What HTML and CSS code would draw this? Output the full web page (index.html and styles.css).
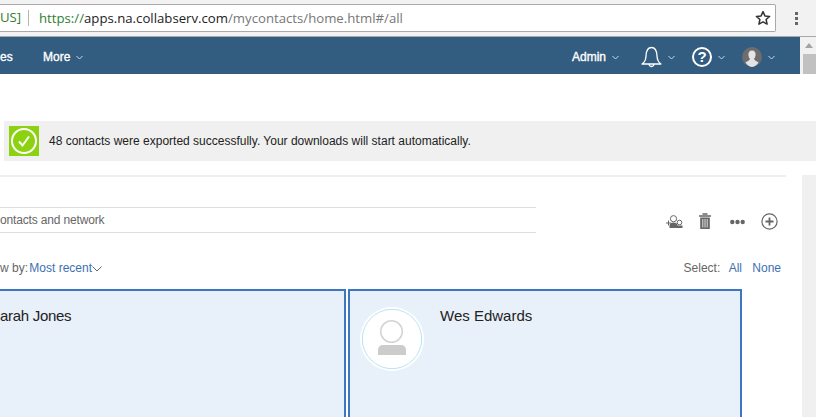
FILE: index.html
```html
<!DOCTYPE html>
<html lang="en">
<head>
<meta charset="utf-8">
<title>Contacts</title>
<link rel="stylesheet" href="styles.css">
</head>
<body>
<header class="chrome">
  <div class="address">
    <span class="cert">US]</span>
    <span class="url"><span class="scheme">https://</span><span class="host">apps.na.collabserv.com</span><span class="path">/mycontacts/home.html#/all</span></span>
    <svg class="star" width="16" height="16" viewBox="0 0 16 16"><path d="M8 1.600l1.900 4.300 4.700.5-3.500 3.100 1 4.600L8 11.800l-4.100 2.300 1-4.600-3.500-3.100 4.700-.5z" fill="none" stroke="#333" stroke-width="1.500" stroke-linejoin="round"/></svg>
  </div>
  <div class="kebab"><i></i><i></i><i></i></div>
</header>
<div class="navrow">
  <nav class="nav">
    <span class="nav-clip nav-text">es</span>
    <span class="nav-item more nav-text">More <svg class="chev" width="7" height="5" viewBox="0 0 7 5"><path d="M.5 1l3 3 3-3" fill="none" stroke="#c9d6e2"/></svg></span>
    <span class="nav-right">
      <span class="nav-item nav-text">Admin <svg class="chev" width="7" height="5" viewBox="0 0 7 5"><path d="M.5 1l3 3 3-3" fill="none" stroke="#c9d6e2"/></svg></span>
      <span class="nav-icon bell">
        <svg width="22" height="22" viewBox="0 0 22 22"><path d="M1 18c2.500-1.500 3.800-4 4-8 .2-5 2-8.500 5.500-8.500S15.800 5 16 10c.2 4 1.500 6.500 4 8zM8 18c.3 3.300 4.700 3.300 5 0" fill="none" stroke="#fff" stroke-width="1.300" stroke-linejoin="round"/></svg>
        <svg class="chev" width="7" height="5" viewBox="0 0 7 5"><path d="M.5 1l3 3 3-3" fill="none" stroke="#c9d6e2"/></svg>
      </span>
      <span class="nav-icon help">
        <span class="help-ring">?</span>
        <svg class="chev" width="7" height="5" viewBox="0 0 7 5"><path d="M.5 1l3 3 3-3" fill="none" stroke="#c9d6e2"/></svg>
      </span>
      <span class="nav-icon user">
        <svg width="20" height="20" viewBox="0 0 20 20"><circle cx="10" cy="10" r="10" fill="#6d6d6d"/><path d="M10 3.500c2.500 0 3.800 2 3.600 4.500-.2 2-.9 3.200-1.600 4 .2 1.300 2.500 1.900 4.500 3.500A10 10 0 0 1 10 20a10 10 0 0 1-6.500-4.500c2-1.600 4.300-2.200 4.500-3.500-.7-.8-1.400-2-1.600-4C6.200 5.500 7.500 3.500 10 3.500z" fill="#e4e4e4"/></svg>
        <svg class="chev" width="7" height="5" viewBox="0 0 7 5"><path d="M.5 1l3 3 3-3" fill="none" stroke="#c9d6e2"/></svg>
      </span>
    </span>
  </nav>
  <div class="scrollbar"><svg class="arrow" width="8" height="5" viewBox="0 0 8 5"><path d="M4 0l4 5H0z" fill="#a3a3a3"/></svg><div class="thumb"></div></div>
</div>
<main class="page">
  <div class="notice">
    <span class="notice-icon">
      <svg width="30" height="30" viewBox="0 0 30 30"><circle cx="15" cy="15" r="12" fill="none" stroke="#fff" stroke-width="2"/><path d="M10 15.500l3.500 4 6.500-9" fill="none" stroke="#fff" stroke-width="2"/></svg>
    </span>
    <span>48 contacts were exported successfully. Your downloads will start automatically.</span>
  </div>
  <div class="body">
    <div class="content">
      <div class="toolbar">
        <div class="search"><span class="search-text">ontacts and network</span></div>
        <div class="tools">
          <svg class="tool-user" width="17" height="14" viewBox="0 0 17 14"><path d="M0 8h5M2.500 5.500v5" stroke="#666"/><circle cx="7.500" cy="3.700" r="3.100" fill="none" stroke="#666"/><path d="M3.500 13v-2.500C3.500 8.500 5 7.500 7.500 7.500s4 1 4 3V13z" fill="#666"/><circle cx="13.500" cy="7.500" r="2.300" fill="#fff" stroke="#666"/><path d="M11 10.500h5.500V13H11z" fill="#666"/></svg>
          <svg class="tool-trash" width="12" height="16" viewBox="0 0 12 16"><path d="M3.500 1h5M0 3h12" stroke="#666" stroke-width="1.500"/><path d="M1.200 4.500h9.600V16H1.200z" fill="#666"/><path d="M3.800 6v8.500M6 6v8.500M8.200 6v8.500" stroke="#fff" stroke-width=".8"/></svg>
          <svg class="tool-more" width="15" height="6" viewBox="0 0 15 6"><circle cx="2.300" cy="3" r="2.200" fill="#666"/><circle cx="7.500" cy="3" r="2.200" fill="#666"/><circle cx="12.700" cy="3" r="2.200" fill="#666"/></svg>
          <svg class="tool-add" width="17" height="17" viewBox="0 0 17 17"><circle cx="8.500" cy="8.500" r="7.600" fill="none" stroke="#666" stroke-width="1.200"/><path d="M8.500 4.500v8M4.500 8.500h8" stroke="#666" stroke-width="1.800"/></svg>
        </div>
      </div>
      <div class="filters">
        <div class="view">w by: <a class="link">Most recent</a><svg width="10" height="6" viewBox="0 0 10 6"><path d="M.5.500l4.500 4.500L9.500.500" fill="none" stroke="#666"/></svg></div>
        <div class="select">Select: <a class="link">All</a> <a class="link">None</a></div>
      </div>
      <div class="cards">
        <article class="card first"><span class="name">arah Jones</span></article>
        <article class="card">
          <span class="avatar">
            <svg width="64" height="64" viewBox="0 0 64 64"><circle cx="32" cy="32" r="32" fill="#fff"/><circle cx="32" cy="32" r="29.700" fill="#fff" stroke="#a6dcef" stroke-width=".8"/><circle cx="31.500" cy="24.500" r="10.800" fill="none" stroke="#d4d4d4" stroke-width="1.500"/><path d="M18 48v-5c0-3 2-5 5-5h18c3 0 5 2 5 5v5z" fill="#cccccc"/></svg>
          </span>
          <span class="name">Wes Edwards</span>
        </article>
      </div>
    </div>
    <aside class="gutter"></aside>
  </div>
</main>
</body>
</html>
```
FILE: styles.css
```css
* { box-sizing: border-box; }
html, body { margin: 0; padding: 0; height: 100%; overflow: hidden; background: #fff; }
body { width: 816px; height: 417px; font-family: "Liberation Sans", Arial, sans-serif; font-size: 12px; color: #222; }

.chrome { height: 37px; background: #f2f2f2; border-bottom: 1px solid #a8a8a8; display: flex; align-items: flex-start; padding-top: 4px; }
.address { width: 776px; height: 28px; background: #fff; border: 1px solid #a9a9a9; border-left: 0; border-radius: 0 2px 2px 0; display: flex; align-items: center; font-family: "Open Sans", sans-serif; font-size: 13.2px; }
.cert { color: #2f7d32; width: 29px; border-right: 1px solid #b5b5b5; height: 16px; line-height: 15px; padding-right: 9px; text-align: right; }
.url { margin-left: 10px; flex: 1; white-space: nowrap; }
.scheme { color: #2e7d32; }
.host { color: #222; }
.path { color: #777; }
.star { margin-right: 4px; }
.kebab { width: 40px; display: flex; flex-direction: column; align-items: center; gap: 2px; padding-top: 8px; }
.kebab i { width: 3px; height: 3px; background: #666; display: block; }

.navrow { display: flex; height: 37px; }
.nav { width: 800px; background: #325c80; color: #fff; display: flex; align-items: center; padding-top: 3px; }
.nav-text { -webkit-text-stroke: .35px #fff; }
.nav-clip { width: 43px; }
.nav-item { display: inline-flex; align-items: center; gap: 6px; }
.chev { flex: none; }
.nav-right { margin-left: auto; display: flex; align-items: center; padding-right: 25px; }
.nav-icon { display: inline-flex; align-items: center; gap: 6px; }
.bell { margin-left: 22px; gap: 5px; }
.help { margin-left: 17px; }
.help-ring { width: 20px; height: 20px; border: 2px solid #fff; border-radius: 50%; font-size: 15px; font-weight: bold; line-height: 16px; text-align: center; }
.user { margin-left: 17px; }
.scrollbar { width: 16px; background: #f1f1f1; display: flex; flex-direction: column; align-items: center; padding-top: 6px; }
.arrow { margin-left: 1px; }
.thumb { width: 13px; margin-left: 2px; height: 20px; margin-top: 6px; background: #c1c1c1; }

.page { display: flex; flex-direction: column; }
.notice { margin: 47px 0 0 4px; height: 40px; background: #f0f0f0; display: flex; align-items: center; gap: 10px; padding-left: 5px; color: #222; }
.notice-icon { width: 30px; height: 30px; background: #8cd211; display: block; }
.notice-icon svg { display: block; }

.body { margin-top: 14px; display: flex; justify-content: space-between; }
.content { width: 786px; border-top: 2px solid #eeeeee; }
.gutter { width: 14px; height: 260px; background: #f0f0f0; }

.toolbar { display: flex; align-items: center; justify-content: space-between; margin-top: 30px; }
.search { width: 536px; height: 26px; border-top: 1px solid #dedede; border-bottom: 1px solid #dedede; line-height: 24px; color: #666; }
.search-text { display: block; letter-spacing: -.16px; }
.tools { display: flex; align-items: center; padding-right: 8px; margin-top: 3px; }
.tool-user { margin-top: 1px; }
.tool-trash { margin-left: 16px; margin-top: -1px; }
.tool-more { margin-left: 19px; }
.tool-add { margin-left: 16px; }

.filters { display: flex; justify-content: space-between; margin-top: 28px; padding-right: 5px; color: #666; }
.view .link { margin-left: -2px; }
.link { color: #3d70b2; }
.select .link { margin-left: 5px; }
.select .link + .link { margin-left: 7px; }

.cards { display: flex; gap: 2px; margin-top: 14px; }
.card { width: 394px; height: 140px; background: #e8f0f9; border: 2px solid #3f76c2; display: flex; align-items: flex-start; padding: 16px 0 0 10px; font-size: 15px; }
.first { width: 346px; border-left: 0; padding-left: 0; }
.first .name { letter-spacing: -.3px; }
.avatar { width: 64px; height: 64px; margin-right: 16px; display: block; }
.name { line-height: 17px; color: #222; }
```
